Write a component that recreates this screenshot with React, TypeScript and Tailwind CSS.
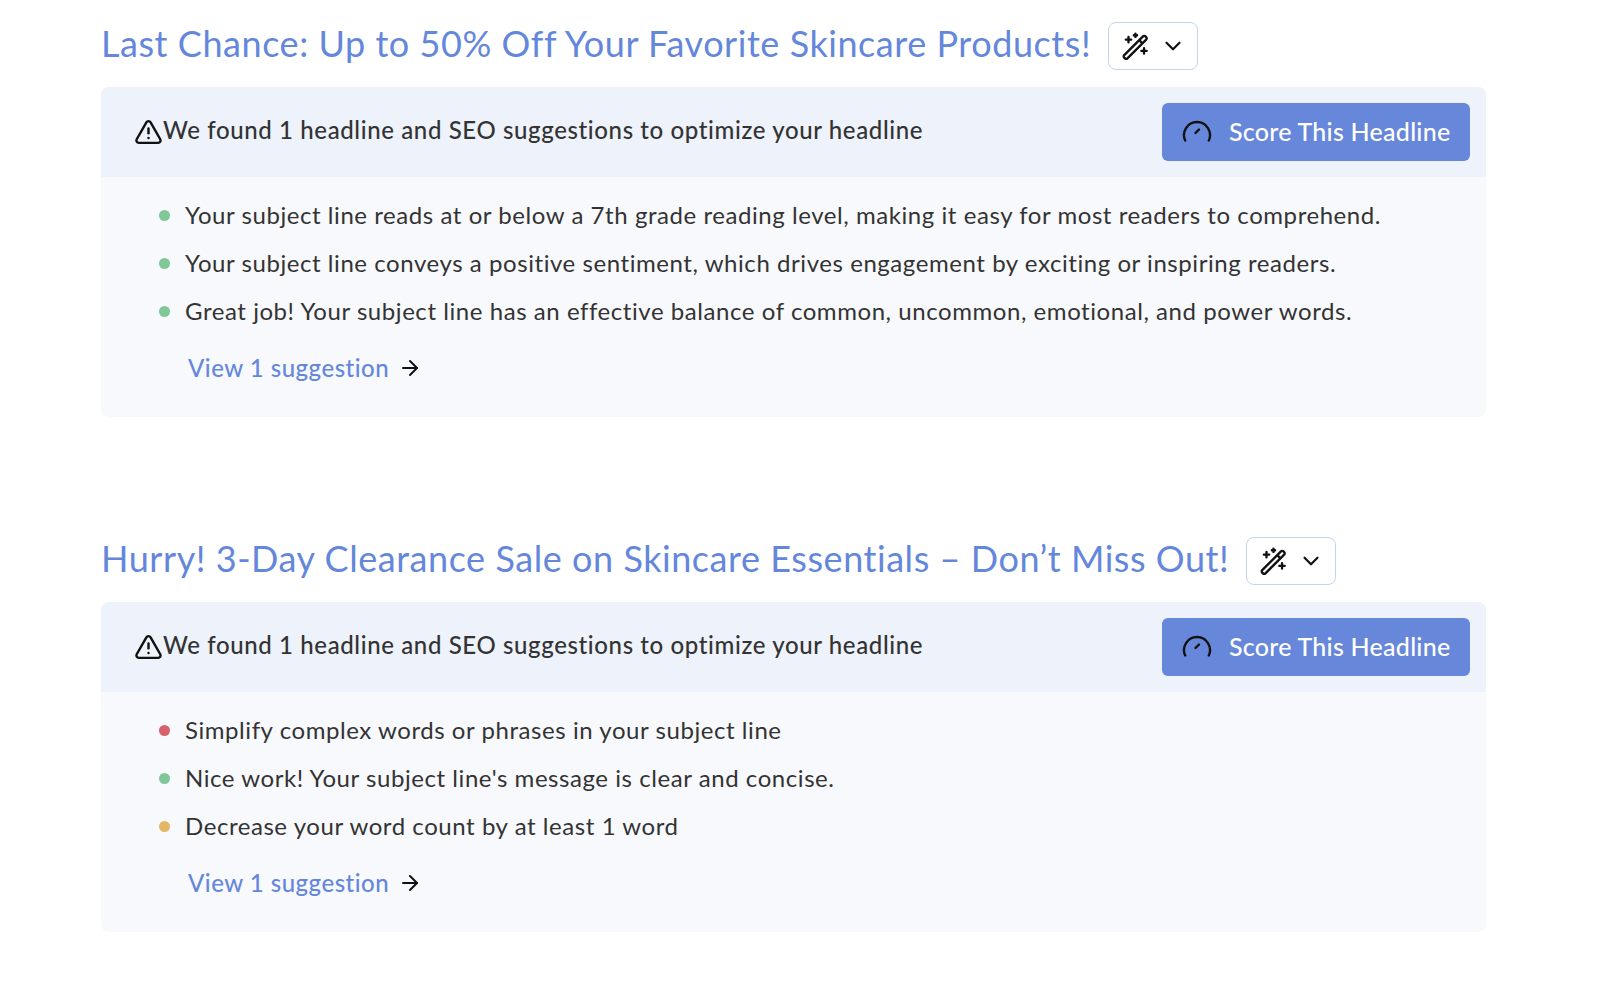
import { ArrowRight, ChevronDown, TriangleAlert } from "lucide-react"

const headlines = [
  {
    title: "Last Chance: Up to 50% Off Your Favorite Skincare Products!",
    items: [
      { color: "bg-[#7fc797]", text: "Your subject line reads at or below a 7th grade reading level, making it easy for most readers to comprehend." },
      { color: "bg-[#7fc797]", text: "Your subject line conveys a positive sentiment, which drives engagement by exciting or inspiring readers." },
      { color: "bg-[#7fc797]", text: "Great job! Your subject line has an effective balance of common, uncommon, emotional, and power words." },
    ],
  },
  {
    title: "Hurry! 3-Day Clearance Sale on Skincare Essentials – Don’t Miss Out!",
    items: [
      { color: "bg-[#d6616b]", text: "Simplify complex words or phrases in your subject line" },
      { color: "bg-[#7fc797]", text: "Nice work! Your subject line's message is clear and concise." },
      { color: "bg-[#e5b765]", text: "Decrease your word count by at least 1 word" },
    ],
  },
]

function WandIcon() {
  return (
    <svg width="30" height="30" viewBox="0 0 28 28" fill="none" stroke="#111" strokeWidth="2.2" strokeLinejoin="round">
      <path d="M3 22.5 20.5 5a1.6 1.6 0 0 1 2.3 0l.7.7a1.6 1.6 0 0 1 0 2.3L6 25.5a1.6 1.6 0 0 1-2.3 0l-.7-.7a1.6 1.6 0 0 1 0-2.3Z" />
      <path d="m17 8.5 3 3" />
      <path d="M7 5.5v5M4.5 8h5M13.5 2.5v3M12 4h3M21.5 16v5M19 18.5h5" strokeLinecap="round" />
    </svg>
  )
}

function GaugeIcon() {
  return (
    <svg width="30" height="24" viewBox="0 0 30 24" fill="none" stroke="#111" strokeWidth="2.4" strokeLinecap="round">
      <path d="M3.2 20.5A13 13 0 1 1 26.8 20.5" />
      <path d="m13.5 13 3.5-3.5" />
    </svg>
  )
}

export default function App() {
  return (
    <div className="min-h-[998px] bg-white pt-[22px] pr-[114px] pl-[101px] font-['Lato',sans-serif]">
      {headlines.map((headline) => (
        <section key={headline.title} className="mb-[120px]">
          {/* Title */}
          <div className="mb-[17px] flex h-[48px] items-center gap-[17px]">
            <h2 className="pb-[6px] text-[36px] leading-[44px] font-normal tracking-[0.55px] whitespace-nowrap text-[#6487dc]">
              {headline.title}
            </h2>
            <button className="flex h-[48px] w-[90px] items-center justify-center gap-[9px] rounded-lg border-[1.5px] border-[#c3d4f0] bg-white">
              <WandIcon />
              <ChevronDown className="h-[26px] w-[26px] text-[#111]" strokeWidth={2} />
            </button>
          </div>

          <div className="h-[330px] overflow-hidden rounded-lg bg-[#f8f9fd]">
            {/* Header */}
            <div className="flex h-[90px] items-center justify-between bg-[#edf2fb] pr-[16px] pl-[33px]">
              <div className="flex items-center text-[24px] font-medium tracking-[0.62px] text-[#333]">
                <TriangleAlert className="h-[30px] w-[29px] text-[#111]" strokeWidth={2} />
                <span className="pb-[4px]">We found 1 headline and SEO suggestions to optimize your headline</span>
              </div>
              <button className="flex h-[58px] w-[308px] items-center gap-[17px] rounded-md bg-[#6687da] pl-[20px] text-[25px] font-medium tracking-[0.25px] text-white">
                <GaugeIcon />
                Score This Headline
              </button>
            </div>

            {/* Suggestions */}
            <ul className="flex flex-col gap-[12px] pt-[20px] pl-[58px]">
              {headline.items.map((item) => (
                <li key={item.text} className="flex h-[36px] items-center gap-[15px] text-[24px] tracking-[0.56px] text-[#333]">
                  <span className={`mt-[1px] h-[11px] w-[11px] rounded-full ${item.color}`} />
                  {item.text}
                </li>
              ))}
            </ul>
            <a className="mt-[21px] ml-[87px] flex items-center gap-[9px] text-[24px] font-medium tracking-[0.5px] text-[#6487dc]">
              View 1 suggestion
              <ArrowRight className="h-6 w-6 text-[#111]" strokeWidth={2} />
            </a>
          </div>
        </section>
      ))}
    </div>
  )
}
